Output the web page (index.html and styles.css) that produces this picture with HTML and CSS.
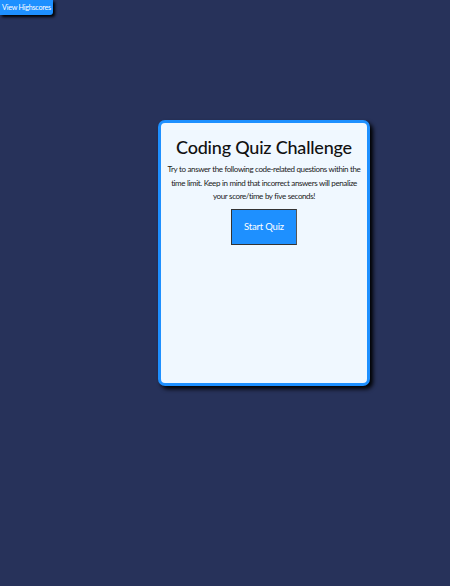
FILE: index.html
```html
<!DOCTYPE html>
<html>
<head>
<meta charset="utf-8">
<link rel="stylesheet" href="styles.css">
</head>
<body>
<header class="topbar">
  <button class="hs-btn">View Highscores</button>
</header>
<main class="stage">
  <section class="card">
    <h1 class="title">Coding Quiz Challenge</h1>
    <p class="intro">Try to answer the following code-related questions within the time limit. Keep in mind that incorrect answers will penalize your score/time by five seconds!</p>
    <button class="start-btn">Start Quiz</button>
  </section>
</main>
</body>
</html>
```
FILE: styles.css
```css
html, body {
  margin: 0;
  padding: 0;
  height: 100%;
}
body {
  background: #27325a;
  font-family: "Lato", sans-serif;
}
.topbar {
  height: 120px;
}
.hs-btn {
  display: block;
  margin: 0;
  padding: 0 1px;
  height: 15px;
  width: 53px;
  background: #1e90ff;
  color: #fff;
  border: none;
  border-radius: 0 0 3px 0;
  box-shadow: 2px 2px 3px #000;
  font-family: inherit;
  font-size: 7.2px;
  letter-spacing: -0.25px;
  white-space: nowrap;
  text-align: center;
}
.stage {
  display: flex;
  padding-left: 158px;
}
.card {
  box-sizing: border-box;
  width: 212px;
  height: 266px;
  background: #f0f8ff;
  border: 3px solid #1e90ff;
  border-radius: 7px;
  box-shadow: 3px 3px 4px #000;
  display: flex;
  flex-direction: column;
  align-items: center;
  padding: 12px 4px;
  text-align: center;
}
.title {
  margin: 0;
  font-size: 18px;
  font-weight: 500;
  letter-spacing: -0.2px;
  color: #111;
  line-height: 24px;
}
.intro {
  margin: 4px 0 0;
  max-width: 194px;
  font-size: 8px;
  letter-spacing: -0.4px;
  word-spacing: 0.3px;
  line-height: 13.5px;
  color: #1a1a1a;
}
.start-btn {
  margin-top: 5px;
  width: 66px;
  height: 36px;
  background: #1e90ff;
  color: #fff;
  border: 1px solid #333;
  border-right-color: #555;
  font-family: inherit;
  font-size: 9.5px;
  letter-spacing: -0.2px;
}
```
